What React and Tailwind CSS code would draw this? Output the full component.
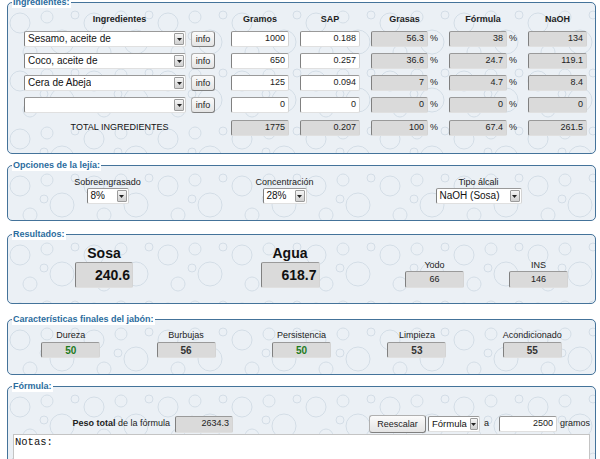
import React from 'react';

// Soap lye calculator form, laid out as a stack of classic fieldsets

const rows = [
  { name: 'Sesamo, aceite de', g: '1000', sap: '0.188', gr: '56.3', f: '38', n: '134' },
  { name: 'Coco, aceite de', g: '650', sap: '0.257', gr: '36.6', f: '24.7', n: '119.1' },
  { name: 'Cera de Abeja', g: '125', sap: '0.094', gr: '7', f: '4.7', n: '8.4' },
  { name: '', g: '0', sap: '0', gr: '0', f: '0', n: '0' },
];

const traits = [
  { label: 'Dureza', v: '50', green: true },
  { label: 'Burbujas', v: '56' },
  { label: 'Persistencia', v: '50', green: true },
  { label: 'Limpieza', v: '53' },
  { label: 'Acondicionado', v: '55' },
];

const inset = 'rounded-[2px] border border-t-[#9a9a9a] border-l-[#808080] border-r-[#d4d4d4] border-b-[#e0e0e0]';
const cols = 'grid grid-cols-[196px_58px_60px_67px_68px_59px] gap-x-[11px]';

function Bubbles({ id }) {
  const c = { fill: 'none', stroke: '#d3dde6', strokeWidth: 1 };
  return (
    <svg className="pointer-events-none absolute inset-0 h-full w-full" aria-hidden="true">
      <defs>
        <pattern id={id} width="74" height="58" patternUnits="userSpaceOnUse">
          <circle cx="12" cy="15" r="10" {...c} />
          <circle cx="39" cy="9" r="6" {...c} />
          <circle cx="54" cy="34" r="12" {...c} />
          <circle cx="22" cy="44" r="7" {...c} />
          <circle cx="67" cy="7" r="4" {...c} />
          <circle cx="36" cy="28" r="4" {...c} />
        </pattern>
      </defs>
      <rect width="100%" height="100%" fill={`url(#${id})`} />
    </svg>
  );
}

function Group({ title, id, className = '', children }) {
  return (
    <fieldset className={`rounded-[5px] border border-[#44739a] bg-[#ebf0f5] ${className}`}>
      <legend className="ml-[4px] bg-white px-[1px] text-[9px] leading-[11px] font-bold text-[#2b6c9e]">{title}</legend>
      <div className="relative overflow-hidden rounded-b-[5px]">
        <Bubbles id={id} />
        <div className="relative">{children}</div>
      </div>
    </fieldset>
  );
}

function Arrow({ small }) {
  return (
    <span className={`mr-[1px] ml-auto flex h-[12px] shrink-0 items-center justify-center rounded-[1px] border border-[#9c9c9c] bg-linear-to-b from-[#f6f6f6] to-[#d0d0d0] ${small ? 'w-[8px]' : 'w-[10px]'}`}>
      <svg width="5" height="3" viewBox="0 0 5 3">
        <path d="M0 0h5L2.5 3z" fill="#222" />
      </svg>
    </span>
  );
}

function Select({ value, className = '', small, text = 'text-[10px]' }) {
  return (
    <div className={`flex h-[16px] items-center bg-white text-[#111] ${text} ${inset} ${className}`}>
      <span className="overflow-hidden pl-[3px] leading-[14px] whitespace-nowrap">{value}</span>
      <Arrow small={small} />
    </div>
  );
}

function Box({ v, gray, className = '', align = 'text-right', text = 'text-[9px]' }) {
  return (
    <div className={`flex h-[16px] items-center px-[3px] text-[#222] ${text} ${align} ${gray ? 'bg-[#dadada]' : 'bg-white'} ${inset} ${className}`}>
      <span className="w-full">{v}</span>
    </div>
  );
}

function Pct({ v }) {
  return (
    <div className="flex items-center">
      <Box v={v} gray className="w-[59px]" />
      <span className="ml-[2px] text-[9px] text-[#222]">%</span>
    </div>
  );
}

function Btn({ children, className = '' }) {
  return (
    <button className={`flex items-center justify-center rounded-[3px] border border-[#b0b0b0] border-r-[#808080] border-b-[#808080] bg-linear-to-b from-[#fbfbfb] to-[#e4e4e4] text-[9px] leading-none text-[#222] ${className}`}>
      {children}
    </button>
  );
}

export default function App() {
  return (
    <div className="min-h-[459px] w-[600px] overflow-hidden bg-white pr-[4px] pl-[7px] font-['Liberation_Sans',Arial,sans-serif]">
      {/* Ingredientes */}
      <Group title="Ingredientes:" id="b1" className="mt-[-3px]">
        <div className="pr-[8px] pb-[17px] pl-[16px]">
          <div className={`${cols} h-[23px] items-center text-[9px] font-bold text-[#222]`}>
            <div className="w-[191px] text-center">Ingredientes</div>
            <div className="text-center">Gramos</div>
            <div className="text-center">SAP</div>
            <div className="text-center">Grasas</div>
            <div className="text-center">Fórmula</div>
            <div className="text-center">NaOH</div>
          </div>
          <div className="flex flex-col gap-[6px]">
            {rows.map((r, i) => (
              <div key={i} className={`${cols} h-[16px] items-center`}>
                <div className="flex items-center">
                  <Select value={r.name} className="w-[162px]" />
                  <Btn className="ml-[5px] h-[16px] w-[24px]">info</Btn>
                </div>
                <Box v={r.g} />
                <Box v={r.sap} />
                <Pct v={r.gr} />
                <Pct v={r.f} />
                <Box v={r.n} gray />
              </div>
            ))}
          </div>
          <div className={`${cols} mt-[7px] h-[16px] items-center`}>
            <div className="w-[191px] text-center text-[9px] text-[#111]">TOTAL INGREDIENTES</div>
            <Box v="1775" gray />
            <Box v="0.207" gray />
            <Pct v="100" />
            <Pct v="67.4" />
            <Box v="261.5" gray />
          </div>
        </div>
      </Group>

      {/* Opciones de la lejía */}
      <Group title="Opciones de la lejía:" id="b2" className="mt-[6px]">
        <div className="flex pt-[5px] pb-[16px] text-[9px] text-[#222]">
          <div className="flex w-[199px] flex-col items-center">
            <div className="h-[12px] leading-[12px]">Sobreengrasado</div>
            <Select value="8%" className="w-[42px]" />
          </div>
          <div className="flex w-[155px] flex-col items-center">
            <div className="h-[12px] leading-[12px]">Concentración</div>
            <Select value="28%" className="w-[44px]" />
          </div>
          <div className="flex w-[233px] flex-col items-center">
            <div className="h-[12px] leading-[12px]">Tipo álcali</div>
            <Select value="NaOH (Sosa)" className="w-[86px]" />
          </div>
        </div>
      </Group>

      {/* Resultados */}
      <Group title="Resultados:" id="b3" className="mt-[8px]">
        <div className="flex items-end pt-[5px] pb-[15px] text-[#111]">
          <div className="flex w-[192px] flex-col items-center">
            <div className="text-[14px] leading-[16px] font-bold">Sosa</div>
            <div className={`mt-[1px] flex h-[26px] w-[58px] items-center justify-end bg-[#dadada] pr-[2px] text-[14px] font-bold ${inset}`}>240.6</div>
          </div>
          <div className="flex w-[180px] flex-col items-center">
            <div className="text-[14px] leading-[16px] font-bold">Agua</div>
            <div className={`mt-[1px] flex h-[26px] w-[59px] items-center justify-end bg-[#dadada] pr-[2px] text-[14px] font-bold ${inset}`}>618.7</div>
          </div>
          <div className="flex w-[109px] flex-col items-center">
            <div className="text-[9px] leading-[11px] text-[#222]">Yodo</div>
            <Box v="66" gray align="text-center" className="h-[17px] w-[59px]" />
          </div>
          <div className="flex w-[99px] flex-col items-center">
            <div className="text-[9px] leading-[11px] text-[#222]">INS</div>
            <Box v="146" gray align="text-center" className="h-[17px] w-[59px]" />
          </div>
        </div>
      </Group>

      {/* Características finales */}
      <Group title="Características finales del jabón:" id="b4" className="mt-[10px]">
        <div className="grid grid-cols-5 px-[5px] pt-[4px] pb-[16px]">
          {traits.map((t) => (
            <div key={t.label} className="flex flex-col items-center">
              <div className="h-[12px] text-[9px] leading-[12px] text-[#222]">{t.label}</div>
              <div className={`mt-[1px] flex h-[16px] w-[59px] items-center justify-center bg-[#dadada] text-[10px] font-bold ${t.green ? 'text-[#1d7a1d]' : 'text-[#333]'} ${inset}`}>
                {t.v}
              </div>
            </div>
          ))}
        </div>
      </Group>

      {/* Fórmula */}
      <Group title="Fórmula:" id="b5" className="mt-[6px]">
        <div className="pt-[22px] pr-[5px] pb-[10px]">
          <div className="flex h-[20px] items-center text-[9px] text-[#222]">
            <div className="w-[162px] text-right">
              <span className="font-bold">Peso total</span> de la fórmula
            </div>
            <Box v="2634.3" gray className="ml-[5px] h-[17px] w-[58px]" />
            <div className="flex-1" />
            <Btn className="h-[18px] w-[57px]">Reescalar</Btn>
            <Select value="Fórmula" small text="text-[9.5px]" className="ml-[2px] w-[52px]" />
            <span className="ml-[4px]">a</span>
            <Box v="2500" className="ml-[10px] w-[58px]" />
            <span className="ml-[3px]">gramos</span>
          </div>
          <textarea
            readOnly
            defaultValue="Notas:"
            className="ml-[5px] block h-[70px] w-[577px] resize-none border border-[#c4c4c4] bg-white px-[1px] py-[1px] font-['Liberation_Mono','Courier_New',monospace] text-[10.5px] leading-[13px] text-[#111] outline-none"
          />
        </div>
      </Group>
    </div>
  );
}
